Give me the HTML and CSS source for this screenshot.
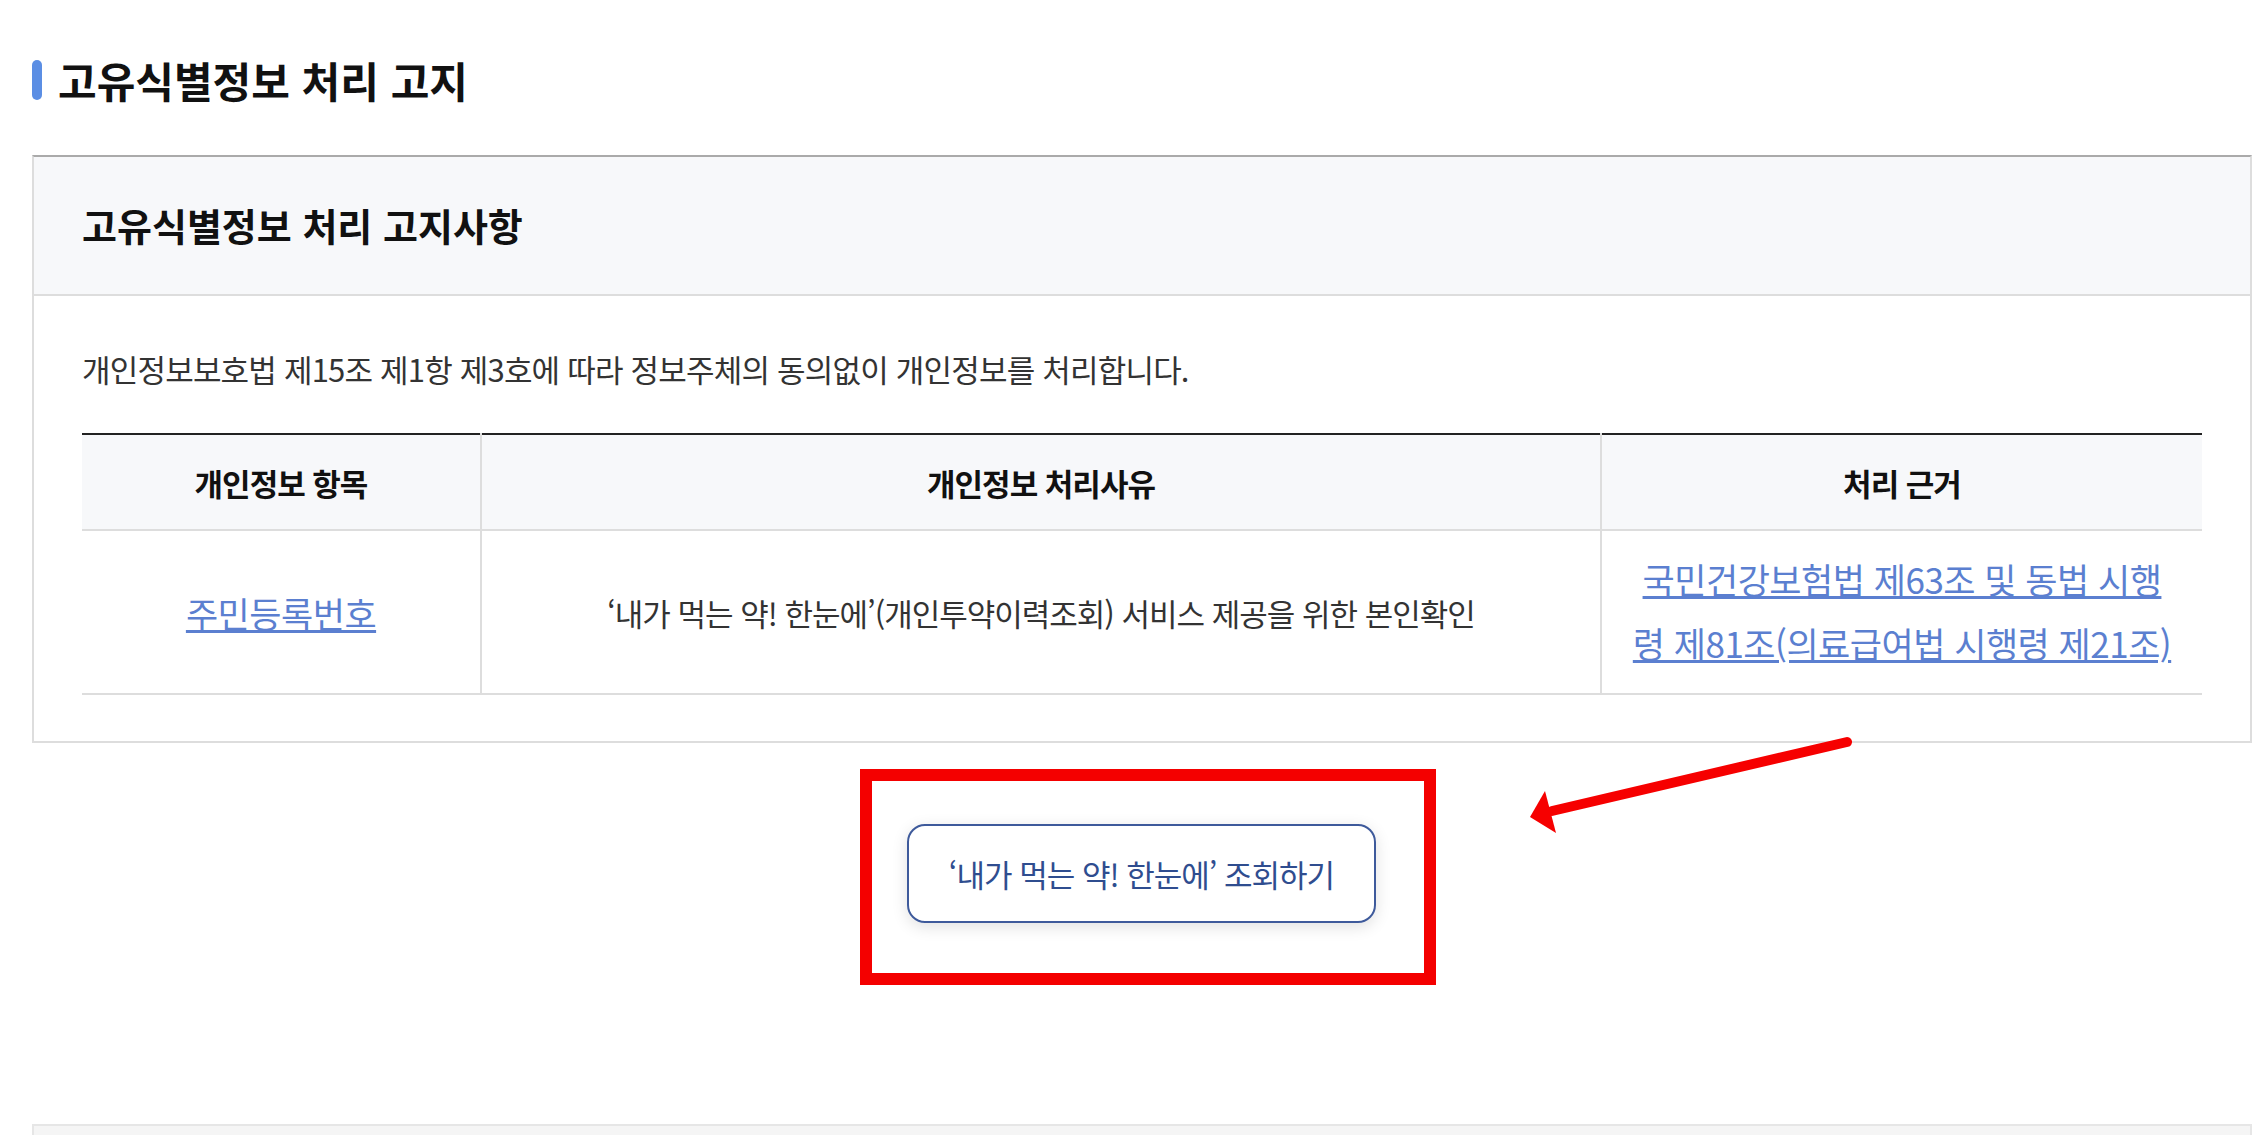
FILE: index.html
```html
<!DOCTYPE html>
<html lang="ko">
<head>
    <meta charset="UTF-8">
    <meta name="viewport" content="width=device-width, initial-scale=1.0">
    <title>고유식별정보 처리 고지</title>
    <link rel="stylesheet" href="styles.css">
</head>
<body>
    <div class="wrap">
        <h2 class="sec-title">고유식별정보 처리 고지</h2>

        <div class="notice-box">
            <div class="notice-head">
                <h3>고유식별정보 처리 고지사항</h3>
            </div>
            <div class="notice-body">
                <p class="notice-text">개인정보보호법 제15조 제1항 제3호에 따라 정보주체의 동의없이 개인정보를 처리합니다.</p>

                <table class="tbl">
                    <colgroup>
                        <col class="col-item">
                        <col class="col-reason">
                        <col class="col-basis">
                    </colgroup>
                    <thead>
                        <tr>
                            <th>개인정보 항목</th>
                            <th>개인정보 처리사유</th>
                            <th>처리 근거</th>
                        </tr>
                    </thead>
                    <tbody>
                        <tr>
                            <td><a href="#" class="link">주민등록번호</a></td>
                            <td>‘내가 먹는 약! 한눈에’(개인투약이력조회) 서비스 제공을 위한 본인확인</td>
                            <td class="basis"><a href="#" class="link">국민건강보험법 제63조 및 동법 시행령 제81조(의료급여법 시행령 제21조)</a></td>
                        </tr>
                    </tbody>
                </table>
            </div>
        </div>

        <div class="btn-area">
            <div class="mark-box">
                <a href="#" class="btn-view">‘내가 먹는 약! 한눈에’ 조회하기</a>
            </div>
        </div>

        <div class="next-box"></div>
    </div>

    <!-- annotation arrow -->
    <svg class="arrow" width="2256" height="1135" viewBox="0 0 2256 1135">
        <line x1="1847" y1="742" x2="1552" y2="811" stroke="#f60000" stroke-width="10" stroke-linecap="round"/>
        <polygon points="1530,817 1545,791 1556,833" fill="#f60000"/>
    </svg>
</body>
</html>
```

FILE: styles.css
```css
body {
    margin: 0;
    font-family: "Noto Sans CJK KR", "Noto Sans", sans-serif;
    color: #333;
    background-color: #fff;
}
.wrap {
    padding: 0 4px 0 32px;
}
.sec-title {
    display: flex;
    align-items: center;
    gap: 16px;
    margin: 56px 0 51px;
    font-size: 42px;
    line-height: 48px;
    font-weight: 700;
    color: #111;
}
.sec-title::before {
    content: "";
    width: 10px;
    height: 40px;
    border-radius: 5px;
    background-color: #5b8ee4;
}
.notice-box {
    border: 2px solid #ddd;
    border-top-color: #aaa;
}
.notice-head {
    padding: 44px 48px 45px;
    background-color: #f7f8fa;
    border-bottom: 2px solid #ddd;
}
.notice-head h3 {
    margin: 0;
    font-size: 38px;
    line-height: 48px;
    font-weight: 700;
    color: #111;
}
.notice-body {
    padding: 50px 48px 46px;
}
.notice-text {
    margin: 0 0 42px;
    font-size: 31px;
    line-height: 45px;
    letter-spacing: -0.8px;
    color: #333;
}
.tbl {
    width: 100%;
    border-collapse: collapse;
    border-top: 2px solid #222;
    table-layout: fixed;
}
.col-item {
    width: 399px;
}
.col-basis {
    width: 601px;
}
.tbl th {
    height: 94px;
    padding: 0;
    background-color: #f7f8fa;
    border-bottom: 2px solid #ddd;
    font-size: 31px;
    font-weight: 700;
    letter-spacing: -1px;
    color: #111;
}
.tbl td {
    height: 162px;
    padding: 0 30px;
    border-bottom: 2px solid #ddd;
    text-align: center;
    font-size: 31px;
    letter-spacing: -1px;
    color: #333;
}
.tbl th + th,
.tbl td + td {
    border-left: 2px solid #ddd;
}
.tbl td.basis {
    padding: 0 30px;
    line-height: 62px;
}
.link {
    font-size: 35px;
    letter-spacing: -0.5px;
    color: #5b7fd0;
    text-decoration: underline;
}
.btn-area {
    display: flex;
    justify-content: center;
    margin-top: 26px;
    padding-left: 12px;
}
.mark-box {
    border: 12px solid #f40000;
    padding: 43px 48px 50px 35px;
}
.btn-view {
    display: flex;
    align-items: center;
    justify-content: center;
    box-sizing: border-box;
    width: 469px;
    height: 99px;
    border: 2px solid #3e5a9b;
    border-radius: 18px;
    box-shadow: 0 4px 16px rgba(0, 0, 0, 0.12);
    font-size: 31px;
    letter-spacing: -1px;
    color: #2f4d8f;
    text-decoration: none;
}
.next-box {
    height: 40px;
    margin-top: 139px;
    background-color: #f5f5f5;
    border: 2px solid #e6e6e6;
}
.arrow {
    position: absolute;
    top: 0;
    left: 0;
    pointer-events: none;
}
```
